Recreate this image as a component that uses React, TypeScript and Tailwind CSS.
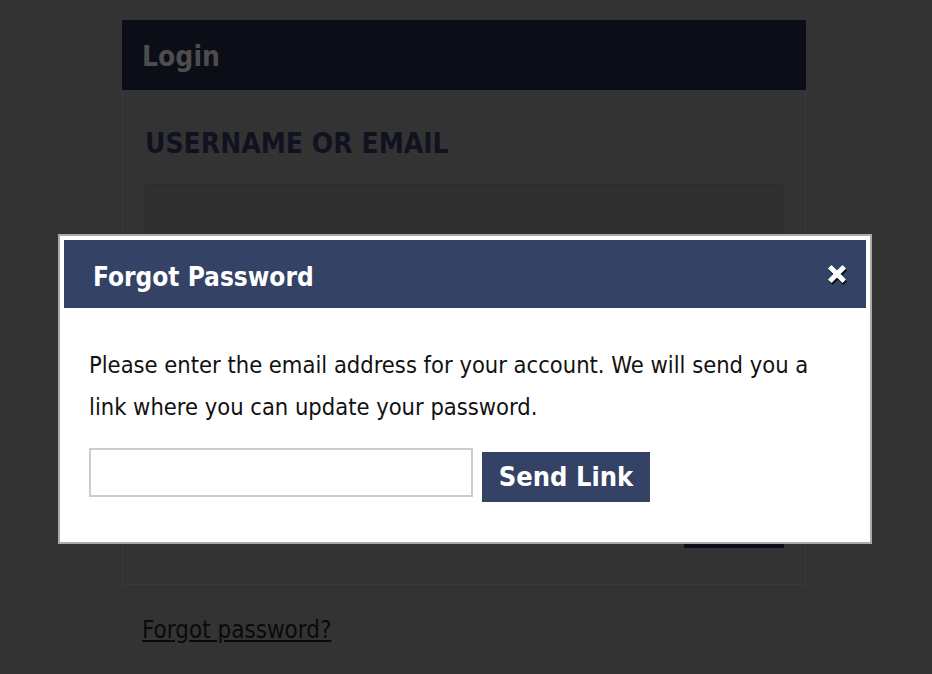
import React from 'react';

const font = "font-['DejaVu_Sans_Condensed','DejaVu_Sans',sans-serif]";

function CloseIcon() {
  return (
    <svg width="24" height="24" viewBox="0 0 24 24" className="drop-shadow-[1px_2px_0_rgba(0,0,0,0.8)]">
      <path
        d="M4 6.5 L6.5 4 L12 9.5 L17.5 4 L20 6.5 L14.5 12 L20 17.5 L17.5 20 L12 14.5 L6.5 20 L4 17.5 L9.5 12 Z"
        fill="#ffffff"
        stroke="#ffffff"
        strokeWidth="1.5"
        strokeLinejoin="round"
      />
    </svg>
  );
}

function LoginBehind() {
  return (
    <div className="pt-5 pl-[122px] w-[806px]">
      <div className="bg-[#0b0e17] h-[70px] flex items-center px-5">
        <h1 className="text-[28px] font-bold text-[#4d4d4d] leading-none mt-1">Login</h1>
      </div>
      <div className="border border-t-0 border-[#393939] h-[495px] px-[22px] pt-[40px] flex flex-col">
        <label className="text-[28px] font-bold text-[#10131f] leading-none">USERNAME OR EMAIL</label>
        <div className="mt-[26px] h-[70px] bg-[#2f2f2f] border border-[#2b2b2b]" />
        <div className="flex-1" />
        <div className="self-end w-[100px] h-[40px] bg-[#0b0e17] mb-[36px] -mr-px" />
      </div>
      <a href="#" className="inline-block mt-[33px] ml-5 text-[24px] text-[#0a0a0a] underline leading-none">
        Forgot password?
      </a>
    </div>
  );
}

export default function App() {
  return (
    <div className={`relative w-[932px] h-[674px] bg-[#333333] overflow-hidden ${font}`}>
      <LoginBehind />

      <div className="absolute left-[58px] top-[234px] w-[814px] h-[310px] bg-white border-2 border-[#aaaaaa] p-1">
        <div className="h-[68px] bg-[#344266] flex items-center justify-between pl-[29px] pr-[17px]">
          <h2 className="text-[26px] font-bold text-white leading-none mt-[5px]">Forgot Password</h2>
          <button className="w-6 h-6 flex items-center justify-center">
            <CloseIcon />
          </button>
        </div>
        <div className="px-[25px] pt-[36px]">
          <p className="text-[23.5px] leading-[42px] text-[#111111]">
            Please enter the email address for your account. We will send you a link where you can update your
            password.
          </p>
          <div className="flex items-start gap-[9px] mt-[20px]">
            <input type="text" className="w-[384px] h-[49px] border-2 border-[#cccccc] bg-white outline-none" />
            <button className="mt-1 w-[168px] h-[50px] bg-[#344266] text-white text-[27px] font-bold">Send Link</button>
          </div>
        </div>
      </div>
    </div>
  );
}
